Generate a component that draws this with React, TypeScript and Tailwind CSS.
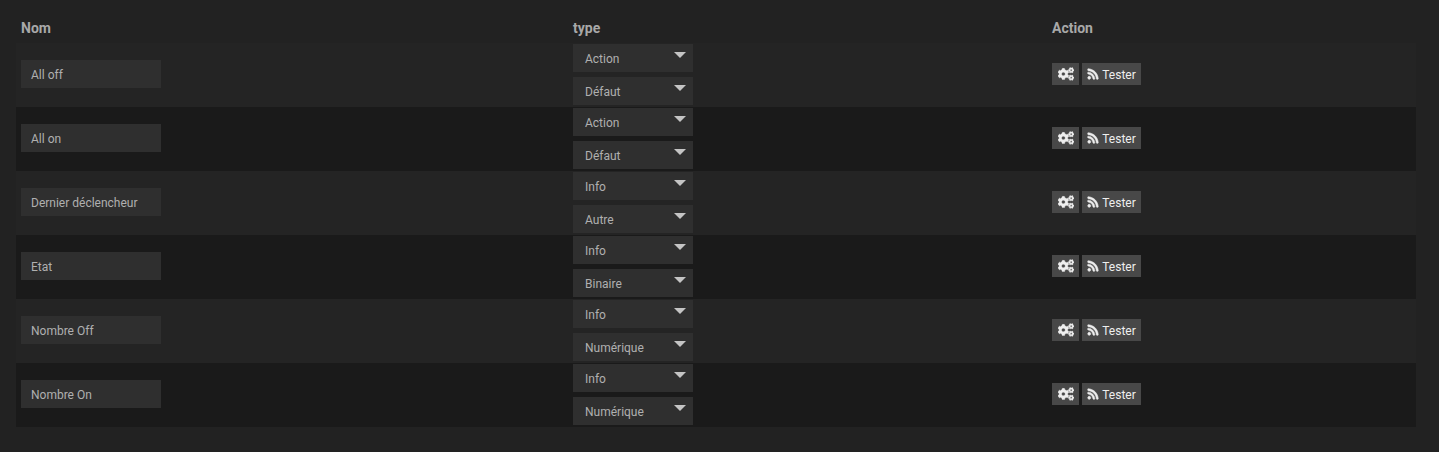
import React from 'react';
import { FaCogs, FaRss } from 'react-icons/fa';

const rows = [
  { name: 'All off', type: 'Action', subType: 'Défaut' },
  { name: 'All on', type: 'Action', subType: 'Défaut' },
  { name: 'Dernier déclencheur', type: 'Info', subType: 'Autre' },
  { name: 'Etat', type: 'Info', subType: 'Binaire' },
  { name: 'Nombre Off', type: 'Info', subType: 'Numérique' },
  { name: 'Nombre On', type: 'Info', subType: 'Numérique' },
];

const Select = ({ value }: { value: string }) => (
  <div className="relative flex h-[28px] w-[120px] items-center bg-[#2f2f2f] pl-[12px] pt-[2px] text-[12px] text-[#b0b0b0]">
    {value}
    <span className="absolute right-[7px] top-[8px] h-0 w-0 border-x-[6px] border-t-[6px] border-x-transparent border-t-[#c4c4c4]" />
  </div>
);

export default function App() {
  return (
    <div className="h-[452px] w-full bg-[#222222] px-[16px] pt-[17px] font-['Roboto',sans-serif] text-[12px]">
      <div className="grid h-[26px] grid-cols-[552px_479px_1fr] items-start pl-[5px] text-[14px] font-bold leading-[22px] text-[#a8a8a8]">
        <div>Nom</div>
        <div>type</div>
        <div>Action</div>
      </div>
      <div className="w-[1400px]">
        {rows.map((row, i) => (
          <div
            key={row.name}
            className={`grid h-[64px] grid-cols-[552px_479px_1fr] items-start pl-[5px] ${i % 2 === 0 ? 'bg-[#242424]' : 'bg-[#1a1a1a]'}`}
          >
            <div className="mt-[17px] flex h-[28px] w-[140px] items-center bg-[#2f2f2f] pl-[10px] pt-[2px] text-[#b0b0b0]">
              {row.name}
            </div>
            <div className="mt-[1px] flex flex-col gap-[5px]">
              <Select value={row.type} />
              <Select value={row.subType} />
            </div>
            <div className="mt-[20px] flex gap-[3px]">
              <button className="flex h-[22px] w-[27px] items-center justify-center bg-[#484848] text-[#eeeeee]">
                <FaCogs className="h-[16px] w-[16px]" stroke="currentColor" strokeWidth={16} />
              </button>
              <button className="flex h-[22px] w-[59px] items-center justify-center gap-[3px] bg-[#484848] pt-[2px] text-[#eeeeee]">
                <FaRss className="-mt-[2px] h-[12px] w-[12px]" stroke="currentColor" strokeWidth={24} />
                Tester
              </button>
            </div>
          </div>
        ))}
      </div>
    </div>
  );
}
